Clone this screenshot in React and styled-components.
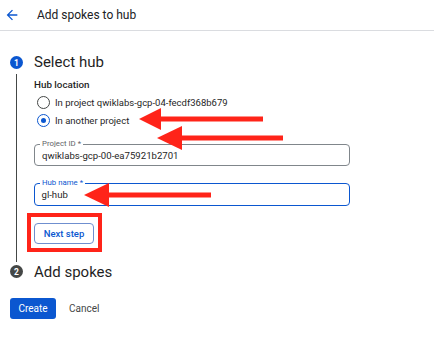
import React from "react";
import styled, {createGlobalStyle} from "styled-components";

const GlobalStyle = createGlobalStyle`
  body {
    margin: 0;
    background: #fff;
    font-family: Roboto, "Liberation Sans", Arial, sans-serif;
    color: #1f1f1f;
  }
`;

const Page = styled.div`
  position: relative;
  width: 434px;
  height: 360px;
  overflow: hidden;
`;

const Header = styled.div`
  height: 31px;
  display: flex;
  align-items: center;
  padding-left: 4px;
  border-bottom: 1px solid #dadce0;
  box-sizing: border-box;
`;

const BackButton = styled.span`
  display: flex;
  width: 16px;
  margin-right: 17px;
  color: #0b57d0;
`;

const Title = styled.h1`
  margin: 0;
  font-size: 12px;
  font-weight: 400;
  color: #202124;
`;

const Body = styled.div`
  padding: 20px 0 0 10px;
`;

const Step = styled.div`
  display: grid;
  grid-template-columns: 24px 1fr;
`;

const Rail = styled.div`
  display: flex;
  flex-direction: column;
  align-items: flex-start;
`;

const StepBadge = styled.div`
  flex: none;
  width: 13px;
  height: 13px;
  margin-top: ${({active}) => (active ? "5px" : "3px")};
  border-radius: 50%;
  background: ${({active}) => (active ? "#0b57d0" : "#444746")};
  color: #fff;
  font-size: 8.5px;
  font-weight: 700;
  display: flex;
  align-items: center;
  justify-content: center;
`;

const RailLine = styled.div`
  flex: 1;
  width: 1px;
  margin: 5px 0 0 6px;
  background: #444746;
`;

const StepTitle = styled.div`
  font-size: 15px;
  line-height: ${({big}) => (big ? "23px" : "20px")};
  color: #1f1f1f;
`;

const StepContent = styled.div`
  padding-top: 5px;
  padding-bottom: 10px;
`;

const GroupLabel = styled.div`
  font-size: 9.8px;
  font-weight: 500;
  color: #1f1f1f;
  margin-bottom: 3px;
`;

const RadioRow = styled.label`
  display: flex;
  align-items: center;
  height: 18px;
  padding-left: 3px;
  font-size: 9.5px;
  color: #1f1f1f;
`;

const RadioDot = styled.span`
  width: 11px;
  height: 11px;
  border-radius: 50%;
  border: 1.3px solid ${({checked}) => (checked ? "#0b57d0" : "#444746")};
  margin-right: 5px;
  display: flex;
  align-items: center;
  justify-content: center;

  &::after {
    content: "";
    width: 5px;
    height: 5px;
    border-radius: 50%;
    background: ${({checked}) => (checked ? "#0b57d0" : "transparent")};
  }
`;

const Field = styled.div`
  position: relative;
  width: 316px;
  height: ${({focused}) => (focused ? "23px" : "22px")};
  box-sizing: border-box;
  margin-top: ${({first}) => (first ? "15px" : "17px")};
  border: ${({focused}) => (focused ? "1.5px solid #0b57d0" : "1px solid #80868b")};
  border-radius: 4px;
  display: flex;
  align-items: center;
  padding-left: ${({focused}) => (focused ? "6.5px" : "7px")};
  font-size: 9.6px;
  color: #1f1f1f;
`;

const FieldLabel = styled.span`
  position: absolute;
  top: -6px;
  left: 5px;
  padding: 0 2px;
  background: #fff;
  font-size: 7.8px;
  line-height: 10px;
  color: ${({focused}) => (focused ? "#0b57d0" : "#5f6368")};
`;

const Highlight = styled.div`
  width: fit-content;
  margin: 7px 0 0 -7px;
  padding: 6px 4px 4px 3px;
  border: 4px solid #ff2419;
  line-height: 0;
`;

const OutlineButton = styled.button`
  width: 60px;
  height: 21px;
  border: 1px solid #6f8fcf;
  border-radius: 4px;
  background: #fff;
  color: #0b57d0;
  font-family: inherit;
  font-size: 9.5px;
  font-weight: 500;
  padding: 0;
`;

const Actions = styled.div`
  display: flex;
  align-items: center;
  gap: 13px;
  margin: 16px 0 0 0;
`;

const PrimaryButton = styled.button`
  width: 46px;
  height: 21px;
  border: 0;
  border-radius: 3px;
  background: #0b57d0;
  color: #fff;
  font-family: inherit;
  font-size: 10px;
  padding: 0;
`;

const TextButton = styled.button`
  border: 0;
  background: none;
  color: #444746;
  font-family: inherit;
  font-size: 10px;
  padding: 0;
`;

const Annotations = styled.svg`
  position: absolute;
  left: 0;
  top: 0;
  pointer-events: none;
`;

const arrows = [
  {tip: [139, 119], base: 161, half: 11, end: 263, thick: 5},
  {tip: [157, 138], base: 182, half: 12, end: 283, thick: 5},
  {tip: [84, 195], base: 109, half: 12, end: 211, thick: 5},
];

const App = () => (
  <Page>
    <GlobalStyle/>
    <Header>
      <BackButton>
        <svg width="16" height="16" viewBox="0 0 24 24">
          <path d="M20 11H7.83l5.59-5.59L12 4l-8 8 8 8 1.41-1.41L7.83 13H20v-2z" fill="currentColor"/>
        </svg>
      </BackButton>
      <Title>Add spokes to hub</Title>
    </Header>
    <Body>
      <Step>
        <Rail>
          <StepBadge active>1</StepBadge>
          <RailLine/>
        </Rail>
        <div>
          <StepTitle big>Select hub</StepTitle>
          <StepContent>
            <GroupLabel>Hub location</GroupLabel>
            <RadioRow><RadioDot/>In project qwiklabs-gcp-04-fecdf368b679</RadioRow>
            <RadioRow><RadioDot checked/>In another project</RadioRow>
            <Field first>
              <FieldLabel>Project ID *</FieldLabel>
              qwiklabs-gcp-00-ea75921b2701
            </Field>
            <Field focused>
              <FieldLabel focused>Hub name *</FieldLabel>
              gl-hub
            </Field>
            <Highlight>
              <OutlineButton>Next step</OutlineButton>
            </Highlight>
          </StepContent>
        </div>
      </Step>
      <Step>
        <Rail>
          <StepBadge>2</StepBadge>
        </Rail>
        <StepTitle>Add spokes</StepTitle>
      </Step>
      <Actions>
        <PrimaryButton>Create</PrimaryButton>
        <TextButton>Cancel</TextButton>
      </Actions>
    </Body>
    <Annotations width="434" height="360">
      {arrows.map(({tip, base, half, end, thick}, i) => (
        <g key={i} fill="#ff2419">
          <rect x={base - 1} y={tip[1] - thick / 2} width={end - base + 1} height={thick}/>
          <polygon points={`${tip[0]},${tip[1]} ${base},${tip[1] - half} ${base},${tip[1] + half}`}/>
        </g>
      ))}
    </Annotations>
  </Page>
);

export default App;
